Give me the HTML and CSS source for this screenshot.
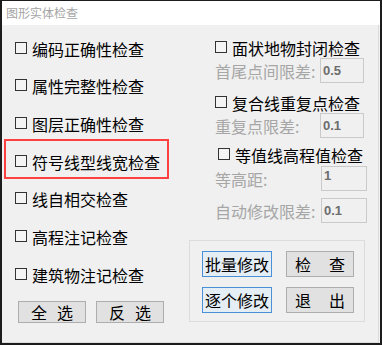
FILE: index.html
```html
<!DOCTYPE html>
<html lang="zh-CN">
<head>
<meta charset="utf-8">
<title>图形实体检查</title>
<link rel="stylesheet" href="styles.css">
</head>
<body>
<div class="window">
  <div class="titlebar">图形实体检查</div>
  <div class="content">
    <div class="left">
      <div class="checks">
        <div class="cb-row"><span class="box"></span><span>编码正确性检查</span></div>
        <div class="cb-row"><span class="box"></span><span>属性完整性检查</span></div>
        <div class="cb-row"><span class="box"></span><span>图层正确性检查</span></div>
        <div class="cb-row"><span class="box"></span><span>符号线型线宽检查</span></div>
        <div class="cb-row"><span class="box"></span><span>线自相交检查</span></div>
        <div class="cb-row"><span class="box"></span><span>高程注记检查</span></div>
        <div class="cb-row"><span class="box"></span><span>建筑物注记检查</span></div>
      </div>
      <div class="btn-row">
        <div class="btn btn-small"><span>全</span><span>选</span></div>
        <div class="btn btn-small"><span>反</span><span>选</span></div>
      </div>
      <div class="highlight"></div>
    </div>
    <div class="right">
      <div class="rcb rcb-1"><span class="box"></span><span>面状地物封闭检查</span></div>
      <div class="field"><span class="flabel">首尾点间限差:</span><span class="input">0.5</span></div>
      <div class="rcb rcb-2"><span class="box"></span><span>复合线重复点检查</span></div>
      <div class="field"><span class="flabel">重复点限差:</span><span class="input">0.1</span></div>
      <div class="rcb rcb-3"><span class="box"></span><span>等值线高程值检查</span></div>
      <div class="field field-3"><span class="flabel">等高距:</span><span class="input input-wide input-top">1</span></div>
      <div class="field field-4"><span class="flabel">自动修改限差:</span><span class="input input-wide">0.1</span></div>
      <div class="group">
        <div class="btn btn-blue">批量修改</div>
        <div class="btn btn-gray btn-spaced"><span>检</span><span>查</span></div>
        <div class="btn btn-blue">逐个修改</div>
        <div class="btn btn-gray btn-spaced"><span>退</span><span>出</span></div>
      </div>
    </div>
  </div>
</div>
</body>
</html>
```

FILE: styles.css
```css
* { box-sizing: border-box; }
html, body { margin: 0; padding: 0; background: #f0f0f0; }
body {
  font-family: "Noto Sans CJK SC", "Liberation Sans", sans-serif;
  font-size: 16px;
  color: #000;
}
.window {
  width: 382px;
  height: 345px;
  border: 2px solid #1c1c1c;
  border-top: 1px solid #1c1c1c;
  background: #f0f0f0;
  overflow: hidden;
}
.titlebar {
  height: 24px;
  background: #fff;
  color: #a4a4a4;
  font-size: 12px;
  line-height: 24px;
  padding-left: 4px;
}
.content {
  display: flex;
  height: 318px;
  border-right: 1px solid #dcdcdc;
  border-bottom: 1px solid #dcdcdc;
  margin-right: 1px;
}
.left {
  position: relative;
  width: 187px;
  padding: 5px 0 0 13px;
}
.checks { display: flex; flex-direction: column; }
.cb-row {
  height: 37.67px;
  display: flex;
  align-items: center;
  line-height: 20px;
  white-space: nowrap;
}
.box {
  width: 12px;
  height: 12px;
  border: 1px solid #333;
  background: #f4f4f4;
  margin-right: 5px;
  margin-bottom: 2px;
  flex: none;
}
.btn-row {
  display: flex;
  gap: 10px;
  margin: 7px 0 0 3px;
}
.btn {
  display: flex;
  align-items: center;
  justify-content: center;
  line-height: 20px;
  white-space: nowrap;
}
.btn-small {
  width: 68px;
  height: 22px;
  background: #e1e1e1;
  border: 1px solid #adadad;
  gap: 10px;
}
.highlight {
  position: absolute;
  left: 2px;
  top: 114px;
  width: 165px;
  height: 40px;
  border: 2px solid #ff4040;
}
.right {
  width: 176px;
  padding-top: 12px;
}
.rcb {
  height: 21px;
  display: flex;
  align-items: center;
  padding-left: 26px;
  line-height: 20px;
  white-space: nowrap;
}
.rcb-2 { margin-top: 9px; }
.rcb-3 { margin-top: 6px; padding-left: 29px; }
.field {
  height: 25px;
  display: flex;
  align-items: center;
  padding-left: 26px;
  color: #a6a6a6;
  white-space: nowrap;
}
.field-3 { margin-top: 1px; }
.field-4 { margin-top: 7px; }
.flabel { line-height: 20px; }
.input {
  margin-left: auto;
  margin-right: 1px;
  width: 44px;
  height: 25px;
  border: 1px solid #cacaca;
  background: #f0f0f0;
  color: #6d6d6d;
  font-family: "Liberation Sans", sans-serif;
  font-weight: bold;
  font-size: 13px;
  line-height: 23px;
  padding-left: 2px;
}
.input-wide { width: 46px; margin-right: -2px; }
.input-top { line-height: 17px; }
.group {
  margin-top: 17px;
  height: 82px;
  border: 1px solid #dcdcdc;
  padding: 10px 0 0 12px;
  display: grid;
  grid-template-columns: 70px 68px;
  grid-auto-rows: 26px;
  column-gap: 14px;
  row-gap: 10px;
}
.btn-blue {
  background: #e5edf5;
  border: 1px solid #4a90d6;
}
.btn-gray {
  background: #e1e1e1;
  border: 1px solid #adadad;
}
.btn-spaced { gap: 18px; }
```
